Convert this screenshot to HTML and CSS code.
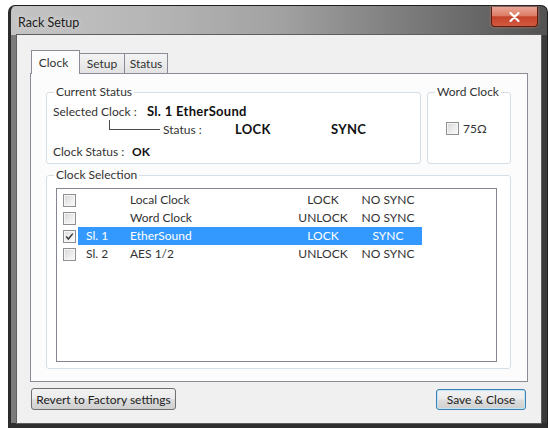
FILE: index.html
```html
<!DOCTYPE html>
<html>
<head>
<meta charset="utf-8">
<title>Rack Setup</title>
<link rel="stylesheet" href="styles.css">
</head>
<body>
<div class="window">
  <div class="titlebar">
    <span class="title">Rack Setup</span>
    <div class="close">
      <svg width="11" height="10" viewBox="0 0 11 10"><path d="M1.5 1 L9.5 9 M9.5 1 L1.5 9" stroke="#fff" stroke-width="2.2" stroke-linecap="round"/></svg>
    </div>
  </div>
  <div class="client">
    <div class="tabs">
      <div class="tab active">Clock</div>
      <div class="tab tab-setup">Setup</div>
      <div class="tab tab-status">Status</div>
    </div>
    <div class="panel">
      <div class="top-row">
        <fieldset class="group current">
          <legend>Current Status</legend>
          <div class="cs-body">
            <div class="cs-row"><span class="lbl-sel">Selected Clock :</span><b class="big">Sl. 1 EtherSound</b></div>
            <div class="cs-row status-row"><span class="connector"></span><span class="lbl-status">Status :</span><b class="big lock">LOCK</b><b class="big">SYNC</b></div>
            <div class="cs-row clock-status"><span class="lbl-cs">Clock Status :</span><b>OK</b></div>
          </div>
        </fieldset>
        <fieldset class="group word">
          <legend>Word Clock</legend>
          <div class="wc-body"><span class="checkbox"></span><span>75Ω</span></div>
        </fieldset>
      </div>
      <fieldset class="group selection">
        <legend>Clock Selection</legend>
        <div class="list">
          <div class="row">
            <div class="ck-cell"><span class="checkbox"></span></div>
            <div class="cells"><span class="slot"></span><span>Local Clock</span><span class="c">LOCK</span><span class="c">NO SYNC</span></div>
          </div>
          <div class="row">
            <div class="ck-cell"><span class="checkbox"></span></div>
            <div class="cells"><span class="slot"></span><span>Word Clock</span><span class="c">UNLOCK</span><span class="c">NO SYNC</span></div>
          </div>
          <div class="row selected">
            <div class="ck-cell"><span class="checkbox checked"><svg width="11" height="11" viewBox="0 0 11 11"><path d="M2.2 5.6 L4.4 8 L8.8 2.6" fill="none" stroke="#3a3a3a" stroke-width="1.5"/></svg></span></div>
            <div class="cells"><span class="slot">Sl. 1</span><span>EtherSound</span><span class="c">LOCK</span><span class="c">SYNC</span></div>
          </div>
          <div class="row">
            <div class="ck-cell"><span class="checkbox"></span></div>
            <div class="cells"><span class="slot">Sl. 2</span><span>AES 1/2</span><span class="c">UNLOCK</span><span class="c">NO SYNC</span></div>
          </div>
        </div>
      </fieldset>
    </div>
    <div class="buttons">
      <button class="btn revert">Revert to Factory settings</button>
      <button class="btn save">Save &amp; Close</button>
    </div>
  </div>
</div>
</body>
</html>
```

FILE: styles.css
```css
body {
  margin: 0;
  background: #ffffff;
  font-family: "Lato", "Noto Sans", sans-serif;
  font-size: 12px;
  color: #333;
}

.window {
  box-sizing: border-box;
  width: 540px;
  height: 423px;
  margin: 5px 0 0 8px;
  border: 1px solid #1e1e1e;
  border-left: 3px solid #2b2b2b;
  border-bottom: 5px solid #2e2e2e;
  border-radius: 7px 7px 0 0;
  padding: 0 6px 0 6px;
  background:
    linear-gradient(to right, #c4c4c4 0%, #b6b6b6 25%, #a2a2a2 50%, #7a7a7a 75%, #525252 100%) top left / 100% 29px no-repeat,
    linear-gradient(to right, #7c7c7c 0%, #6a6a6a 30%, #4a4a4a 70%, #3a3a3a 100%);
}

.titlebar {
  height: 29px;
  display: flex;
  align-items: flex-start;
  justify-content: space-between;
}

.title {
  margin: 10px 0 0 1px;
  line-height: 14px;
  font-size: 12.5px;
  color: #1a1a1a;
  text-shadow: 0 0 6px rgba(255,255,255,0.6);
}

.close {
  box-sizing: border-box;
  width: 47px;
  height: 20px;
  margin: 1px 3px 0 0;
  border: 1px solid #5b1d12;
  border-top: none;
  border-radius: 0 0 4px 4px;
  background: linear-gradient(#eaa595 0%, #dd7d67 45%, #c5432b 52%, #d35a3f 100%);
  box-shadow: 0 0 3px rgba(255, 140, 110, 0.6);
  display: flex;
  align-items: center;
  justify-content: center;
}

.client {
  box-sizing: border-box;
  width: 524px;
  height: 388px;
  background: #f0f0f0;
  padding-top: 15px;
  box-shadow: 0 0 0 1px #5e5e5e;
}

.tabs {
  display: flex;
  align-items: flex-end;
  height: 23px;
  margin-left: 14px;
}

.tab {
  box-sizing: border-box;
  height: 20px;
  border: 1px solid #898c95;
  border-left: none;
  border-bottom: none;
  background: linear-gradient(#f4f4f4, #e2e2e2);
  display: flex;
  align-items: center;
  justify-content: center;
  line-height: 14px;
}

.tab.active {
  width: 49px;
  height: 24px;
  margin-bottom: -1px;
  border-left: 1px solid #898c95;
  background: #fcfcfc;
  position: relative;
  z-index: 1;
  padding-right: 4px;
}

.tab-setup { width: 45px; }
.tab-status { width: 43px; }

.panel {
  box-sizing: border-box;
  width: 498px;
  height: 309px;
  margin-left: 13px;
  border: 1px solid #898c95;
  background: #fcfcfc;
  padding: 11px 0 0 15px;
}

.top-row {
  display: flex;
  gap: 6px;
}

.group {
  box-sizing: border-box;
  margin: 0;
  padding: 0;
  min-width: 0;
  border: 1px solid #d5dfe5;
  border-radius: 3px;
  background: #fff;
}

.group legend {
  padding: 0 2px;
  margin-left: 7px;
  line-height: 14px;
  color: #333;
}

.current { width: 375px; height: 79px; }
.word { width: 84px; height: 79px; }
.selection { width: 465px; height: 201px; margin-top: 4px; }

.cs-body { padding: 5px 0 0 6px; }

.cs-row {
  display: flex;
  height: 15px;
  line-height: 15px;
}

.cs-row b { font-weight: 700; color: #111; }
.cs-row b.big { font-size: 13px; letter-spacing: 0.3px; }

.lbl-sel { width: 94px; }

.status-row {
  margin-top: 3px;
  align-items: flex-start;
}

.connector {
  box-sizing: border-box;
  width: 51px;
  height: 10px;
  margin: -2px 3px 0 56px;
  border-left: 1px solid #4a4a4a;
  border-bottom: 1px solid #4a4a4a;
}

.lbl-status { width: 72px; }
.lock { width: 96px; }

.clock-status { margin-top: 7px; }
.lbl-cs { width: 79px; }

.wc-body {
  display: flex;
  align-items: center;
  gap: 4px;
  margin: 23px 0 0 18px;
  line-height: 13px;
}

.checkbox {
  box-sizing: border-box;
  width: 13px;
  height: 13px;
  border: 1px solid #8e8f8f;
  background: linear-gradient(135deg, #d6d6d6 0%, #eeeeee 60%, #fafafa 100%);
  box-shadow: inset 0 0 0 1px #f6f6f6;
  display: flex;
  align-items: center;
  justify-content: center;
}

.checkbox.checked {
  background: linear-gradient(135deg, #dcdcdc 0%, #f2f2f2 60%, #fcfcfc 100%);
}

.list {
  box-sizing: border-box;
  width: 441px;
  height: 174px;
  margin: 6px 0 0 9px;
  border: 1px solid #828790;
  background: #fff;
  padding-top: 2px;
}

.row {
  display: flex;
  height: 18px;
  line-height: 18px;
}

.ck-cell {
  box-sizing: border-box;
  width: 21px;
  padding-left: 6px;
  display: flex;
  align-items: center;
}

.cells {
  display: grid;
  grid-template-columns: 52px 162px 62px 68px;
  color: #333;
}

.row.selected .cells {
  background: #3399ff;
  color: #fff;
}

.slot { padding-left: 8px; }
.c { text-align: center; }

.buttons {
  display: flex;
  justify-content: space-between;
  align-items: center;
  margin-top: 6px;
  padding: 0 15px 0 14px;
}

.btn {
  box-sizing: border-box;
  height: 22px;
  padding: 0;
  font: inherit;
  color: #222;
  border: 1px solid #707070;
  border-radius: 3px;
  background: linear-gradient(#f2f2f2 0%, #ebebeb 48%, #dddddd 52%, #cfcfcf 100%);
}

.revert { width: 145px; }

.save {
  width: 90px;
  height: 21px;
  border-color: #3c7fb1;
  box-shadow: inset 0 0 0 1px #bfe6f8;
}
```
